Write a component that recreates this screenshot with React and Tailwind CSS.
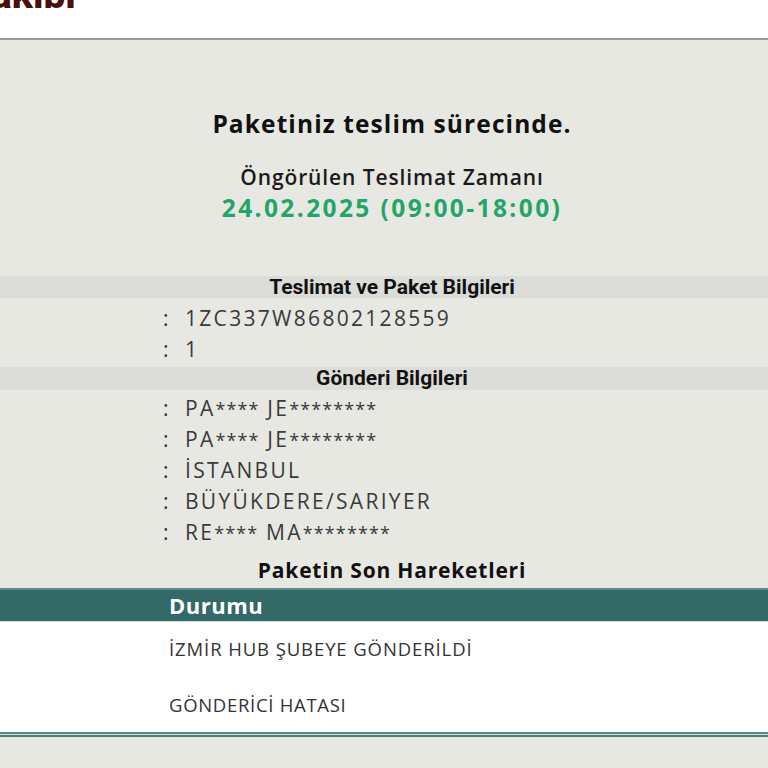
export default function App() {
  const body = { fontFamily: '"Open Sans", Lato, sans-serif' };
  const rob = { fontFamily: 'Roboto, "Liberation Sans", sans-serif' };
  const Val = ({ v }) => {
    const parts = v.split(/(\*+)/).filter(Boolean);
    return (
      <span className="text-[21px] tracking-[2.3px] text-[#3a3a3a] leading-none">
        {parts.map((p, i) =>
          p[0] === '*' ? (
            <span key={i} className="text-[18px] tracking-[1.1px]">{p}</span>
          ) : (
            <span key={i}>{p}</span>
          )
        )}
      </span>
    );
  };
  const Row = ({ v, label }) => (
    <div className="flex h-[31px] items-center">
      <div className="w-[163px] relative h-full">
        {label && <span className="absolute left-[-7px] top-[2px] text-[22px] font-bold text-[#222]" style={{ fontFamily: 'Lato, sans-serif' }}>{label}</span>}
      </div>
      <span className="w-[22px] text-[21px] text-[#333]">:</span>
      <Val v={v} />
    </div>
  );
  return (
    <div className="w-[768px] h-[768px] overflow-hidden bg-[#e8e8e3]" style={body}>
      <div className="h-[40px] bg-white border-b-2 border-[#9a9a96] relative overflow-hidden">
        <span className="absolute left-[-9px] top-[-34px] text-[39px] font-extrabold text-[#4a0f0f]" style={rob}>akibi</span>
      </div>
      <div className="pt-[67px] pl-[16px] flex flex-col items-center">
        <div className="text-[24.5px] font-bold tracking-[1.1px] text-[#111] leading-[34px]">Paketiniz teslim sürecinde.</div>
        <div className="mt-[22px] text-[21px] font-semibold tracking-[0.9px] text-[#1a1a1a] leading-[28px]">Öngörülen Teslimat Zamanı</div>
        <div className="text-[24.5px] font-bold tracking-[2.4px] text-[#22a565] leading-[34px]">24.02.2025 (09:00-18:00)</div>
      </div>
      <div className="mt-[51px] pl-[16px] h-[22px] bg-[#dcdcd8] flex items-center justify-center text-[21px] leading-none font-bold text-[#111]" style={rob}>Teslimat ve Paket Bilgileri</div>
      <div className="pt-[5px]">
        <Row v="1ZC337W86802128559" />
        <Row v="1" />
      </div>
      <div className="mt-[2px] pl-[16px] h-[23px] bg-[#dcdcd8] flex items-center justify-center text-[21px] leading-none font-bold text-[#111]" style={rob}>Gönderi Bilgileri</div>
      <div className="pt-[3px]">
        <Row v="PA**** JE********" />
        <Row v="PA**** JE********" label="ı" />
        <Row v="İSTANBUL" />
        <Row v="BÜYÜKDERE/SARIYER" />
        <Row v="RE**** MA********" />
      </div>
      <div className="mt-[8px] pl-[16px] text-center text-[21px] font-bold tracking-[0.8px] text-[#111] leading-[28px]">Paketin Son Hareketleri</div>
      <div className="mt-[4px] h-[33px] bg-[#336966] border-t-2 border-[#5c8a87] flex items-center pl-[169px] text-[22px] font-bold tracking-[0.5px] text-white">Durumu</div>
      <div className="bg-white h-[111px] border-t border-[#c8dcdc] flex flex-col pl-[169px] text-[18.5px] text-[#333]">
        <div className="mt-[15px] leading-[24px] tracking-[0.9px]">İZMİR HUB ŞUBEYE GÖNDERİLDİ</div>
        <div className="mt-[32px] leading-[24px] tracking-[0.7px]">GÖNDERİCİ HATASI</div>
      </div>
      <div className="h-[2px] bg-[#5a8a88]"></div>
      <div className="h-[1px] bg-[#c6d8d8]"></div>
      <div className="h-[2px] bg-[#4f7e7c]"></div>
    </div>
  );
}
